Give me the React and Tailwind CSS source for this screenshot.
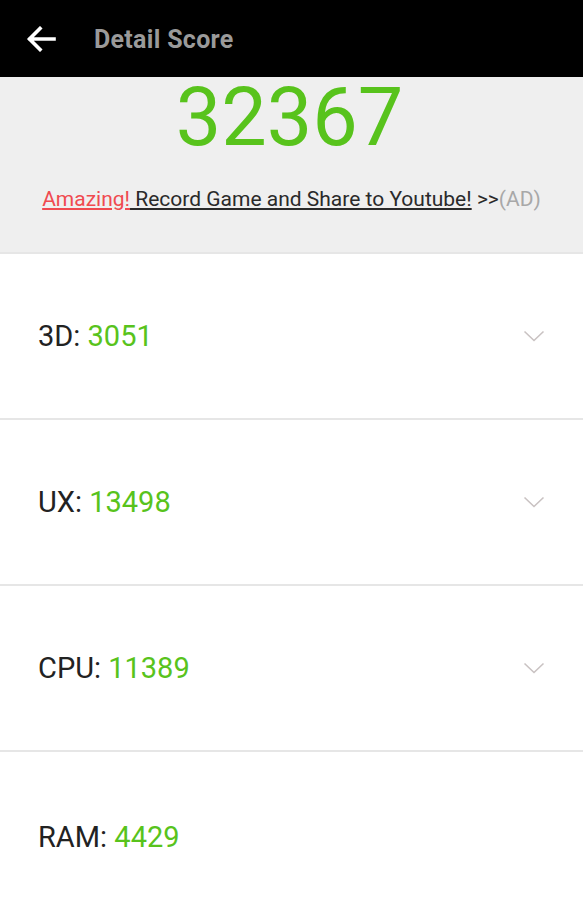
import React from "react";

function Chevron() {
  return (
    <svg width="22" height="12" viewBox="0 0 22 12" className="shrink-0">
      <path d="M1.5 1.5 L11 10.5 L20.5 1.5" fill="none" stroke="#c9c2c2" strokeWidth="1.6" />
    </svg>
  );
}

function Row({ label, value, chevron = true, extra = "" }) {
  return (
    <div className={"h-[166px] border-t-2 border-[#e6e6e6] flex items-center justify-between pl-[38px] pr-[38px] " + extra}>
      <div className="text-[29px] text-[#222222] leading-none">
        {label}: <span className="text-[#58c31c]">{value}</span>
      </div>
      {chevron && <Chevron />}
    </div>
  );
}

export default function App() {
  return (
    <div className="w-[583px] h-[919px] overflow-hidden bg-white" style={{ fontFamily: "Roboto, 'Liberation Sans', sans-serif" }}>
      <div className="h-[77px] bg-black flex items-center pt-[3px]">
        <svg width="30" height="26" viewBox="0 0 30 26" className="ml-[26px] -mt-[2px]">
          <path d="M28 13 H4 M14 2.5 L3.5 13 L14 23.5" fill="none" stroke="#ffffff" strokeWidth="3.6" strokeLinecap="square" />
        </svg>
        <div className="ml-[38px] text-[25px] font-bold text-[#9a9a9a] tracking-[0.3px]">Detail Score</div>
      </div>
      <div className="h-[175px] bg-[#efefef] flex flex-col items-center">
        <div className="text-[81px] leading-none text-[#58c31c] -ml-[4px]">32367</div>
        <div className="mt-[31px] text-[21px] leading-none text-[#2a2a2a] whitespace-nowrap">
          <span className="text-[#f04a50] underline">Amazing!</span>
          <span className="underline"> Record Game and Share to Youtube!</span>
          <span> &gt;&gt;</span>
          <span className="text-[#a8a8a8]">(AD)</span>
        </div>
      </div>
      <Row label="3D" value="3051" />
      <Row label="UX" value="13498" />
      <Row label="CPU" value="11389" />
      <Row label="RAM" value="4429" chevron={false} extra="pt-[6px]" />
    </div>
  );
}
